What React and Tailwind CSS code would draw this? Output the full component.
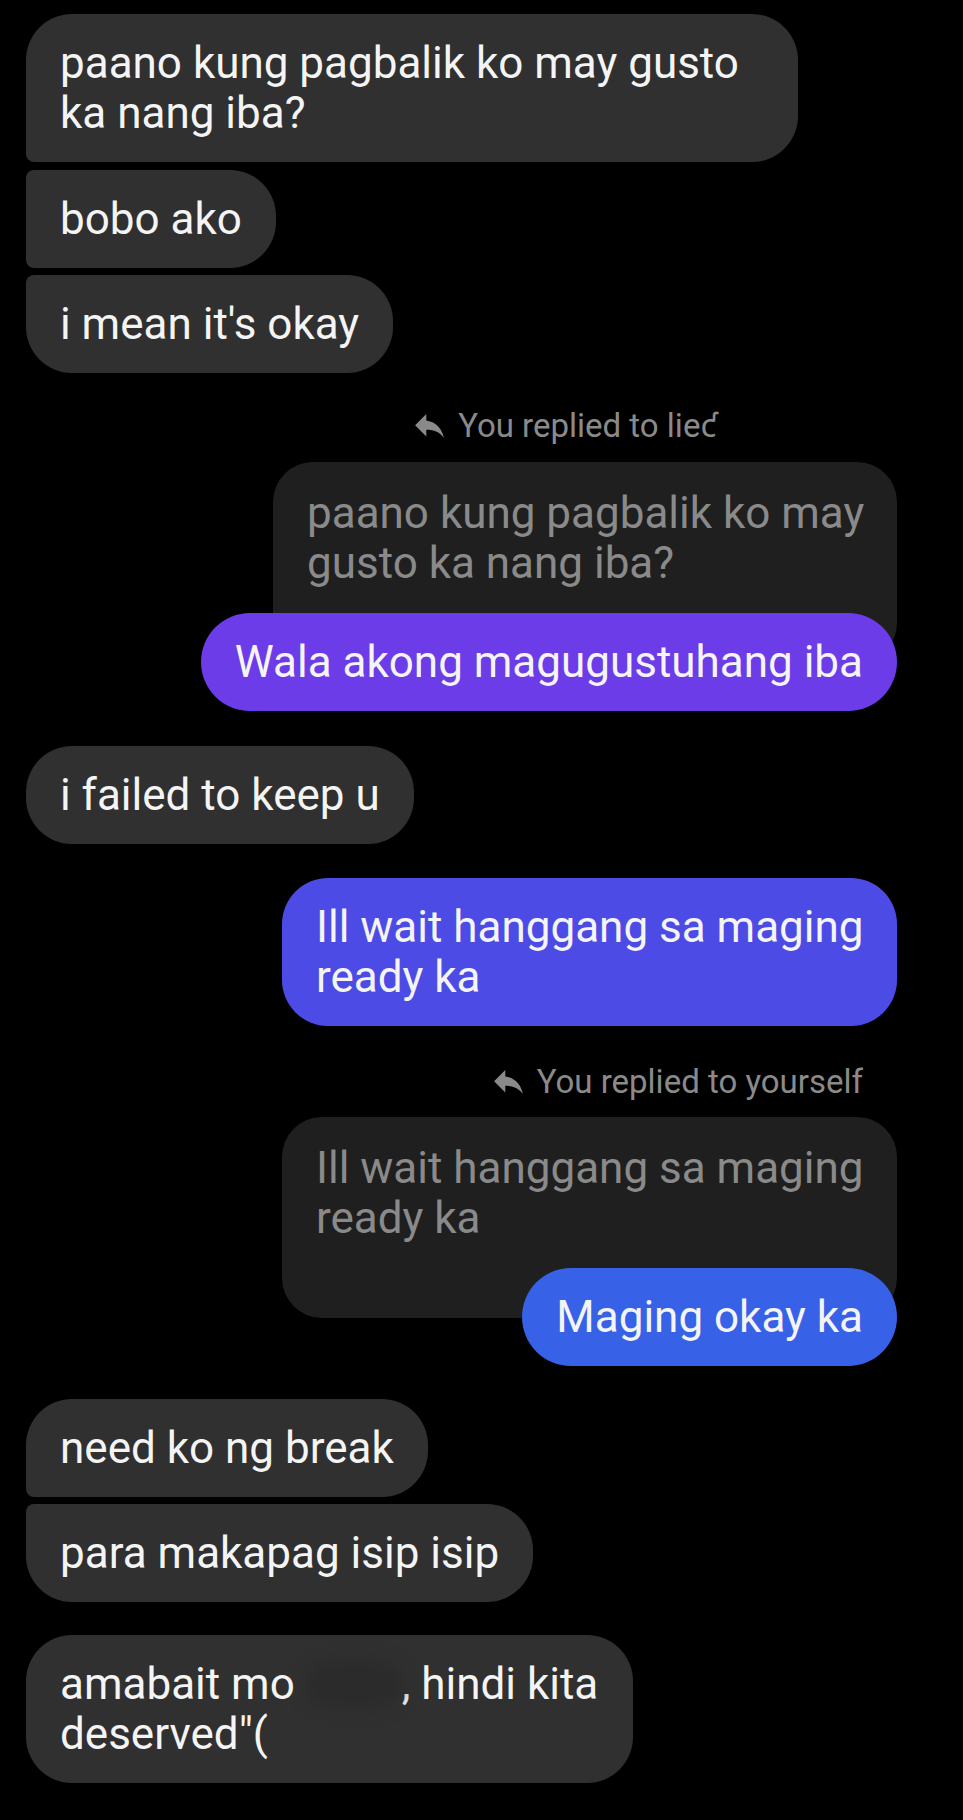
import React from "react";

const Bubble = ({ children, className = "" }) => (
  <div
    className={`px-[34px] py-[24px] text-[44px] leading-[50px] whitespace-nowrap ${className}`}
  >
    {children}
  </div>
);

const ReplyArrow = () => (
  <svg width="29" height="24" viewBox="3 5 18 15" className="shrink-0 mr-[14px]">
    <path
      d="M10 9V5l-7 7 7 7v-4.1c5 0 8.5 1.6 11 5.1-1-5-4-10-11-11z"
      fill="#8a8a8a"
    />
  </svg>
);

const ReplyLabel = ({ text, className = "" }) => (
  <div className={`self-end flex items-center h-[40px] text-[33px] text-[#8a8a8a] ${className}`}>
    <ReplyArrow />
    <span className="leading-[40px]">{text}</span>
  </div>
);

const Quoted = ({ children, className = "" }) => (
  <div
    className={`self-end bg-[#1f1f1f] text-[#8a8a8a] rounded-[40px] px-[34px] pt-[26px] pb-[75px] text-[44px] leading-[50px] whitespace-nowrap ${className}`}
  >
    {children}
  </div>
);

export default function App() {
  return (
    <div className="min-h-[1820px] w-[963px] bg-black font-['Roboto','Noto_Sans',sans-serif] text-[#f4f4f4] flex flex-col pl-[26px] pr-[66px] pt-[14px]">
      {/* first group from them */}
      <Bubble className="self-start w-[772px] bg-[#303030] rounded-tl-[46px] rounded-tr-[46px] rounded-br-[46px] rounded-bl-[8px]">
        paano kung pagbalik ko may gusto
        <br />
        ka nang iba?
      </Bubble>
      <Bubble className="self-start mt-[8px] bg-[#303030] rounded-tl-[8px] rounded-bl-[8px] rounded-tr-[46px] rounded-br-[46px]">
        bobo ako
      </Bubble>
      <Bubble className="self-start mt-[7px] bg-[#303030] rounded-tl-[8px] rounded-bl-[46px] rounded-tr-[46px] rounded-br-[46px]">
        i mean it's okay
      </Bubble>

      {/* reply to them */}
      <ReplyLabel text="You replied to lieƈ" className="mt-[33px] mr-[180px]" />
      <Quoted className="mt-[16px] w-[624px]">
        paano kung pagbalik ko may
        <br />
        gusto ka nang iba?
      </Quoted>
      <Bubble className="self-end relative z-10 -mt-[50px] bg-[#6b3ce8] rounded-[50px]">
        Wala akong magugustuhang iba
      </Bubble>

      <Bubble className="self-start mt-[35px] bg-[#303030] rounded-[46px]">
        i failed to keep u
      </Bubble>

      <Bubble className="self-end mt-[34px] w-[615px] bg-[#4d4be6] rounded-[46px]">
        Ill wait hanggang sa maging
        <br />
        ready ka
      </Bubble>

      {/* reply to yourself */}
      <ReplyLabel text="You replied to yourself" className="mt-[36px] mr-[34px]" />
      <Quoted className="mt-[15px] w-[615px]">
        Ill wait hanggang sa maging
        <br />
        ready ka
      </Quoted>
      <Bubble className="self-end relative z-10 -mt-[50px] bg-[#3762e7] rounded-[50px]">
        Maging okay ka
      </Bubble>

      {/* last group from them */}
      <Bubble className="self-start mt-[33px] bg-[#303030] rounded-tl-[46px] rounded-tr-[46px] rounded-br-[46px] rounded-bl-[8px]">
        need ko ng break
      </Bubble>
      <Bubble className="self-start mt-[7px] bg-[#303030] rounded-tl-[8px] rounded-bl-[46px] rounded-tr-[46px] rounded-br-[46px]">
        para makapag isip isip
      </Bubble>
      <Bubble className="self-start mt-[33px] w-[607px] bg-[#303030] rounded-[46px]">
        amabait mo{" "}
        <span className="inline-block w-[96px] h-[46px] align-[-8px] rounded-full bg-[#2b2b2b] blur-[8px]" />
        , hindi kita
        <br />
        deserved"(
      </Bubble>
    </div>
  );
}
